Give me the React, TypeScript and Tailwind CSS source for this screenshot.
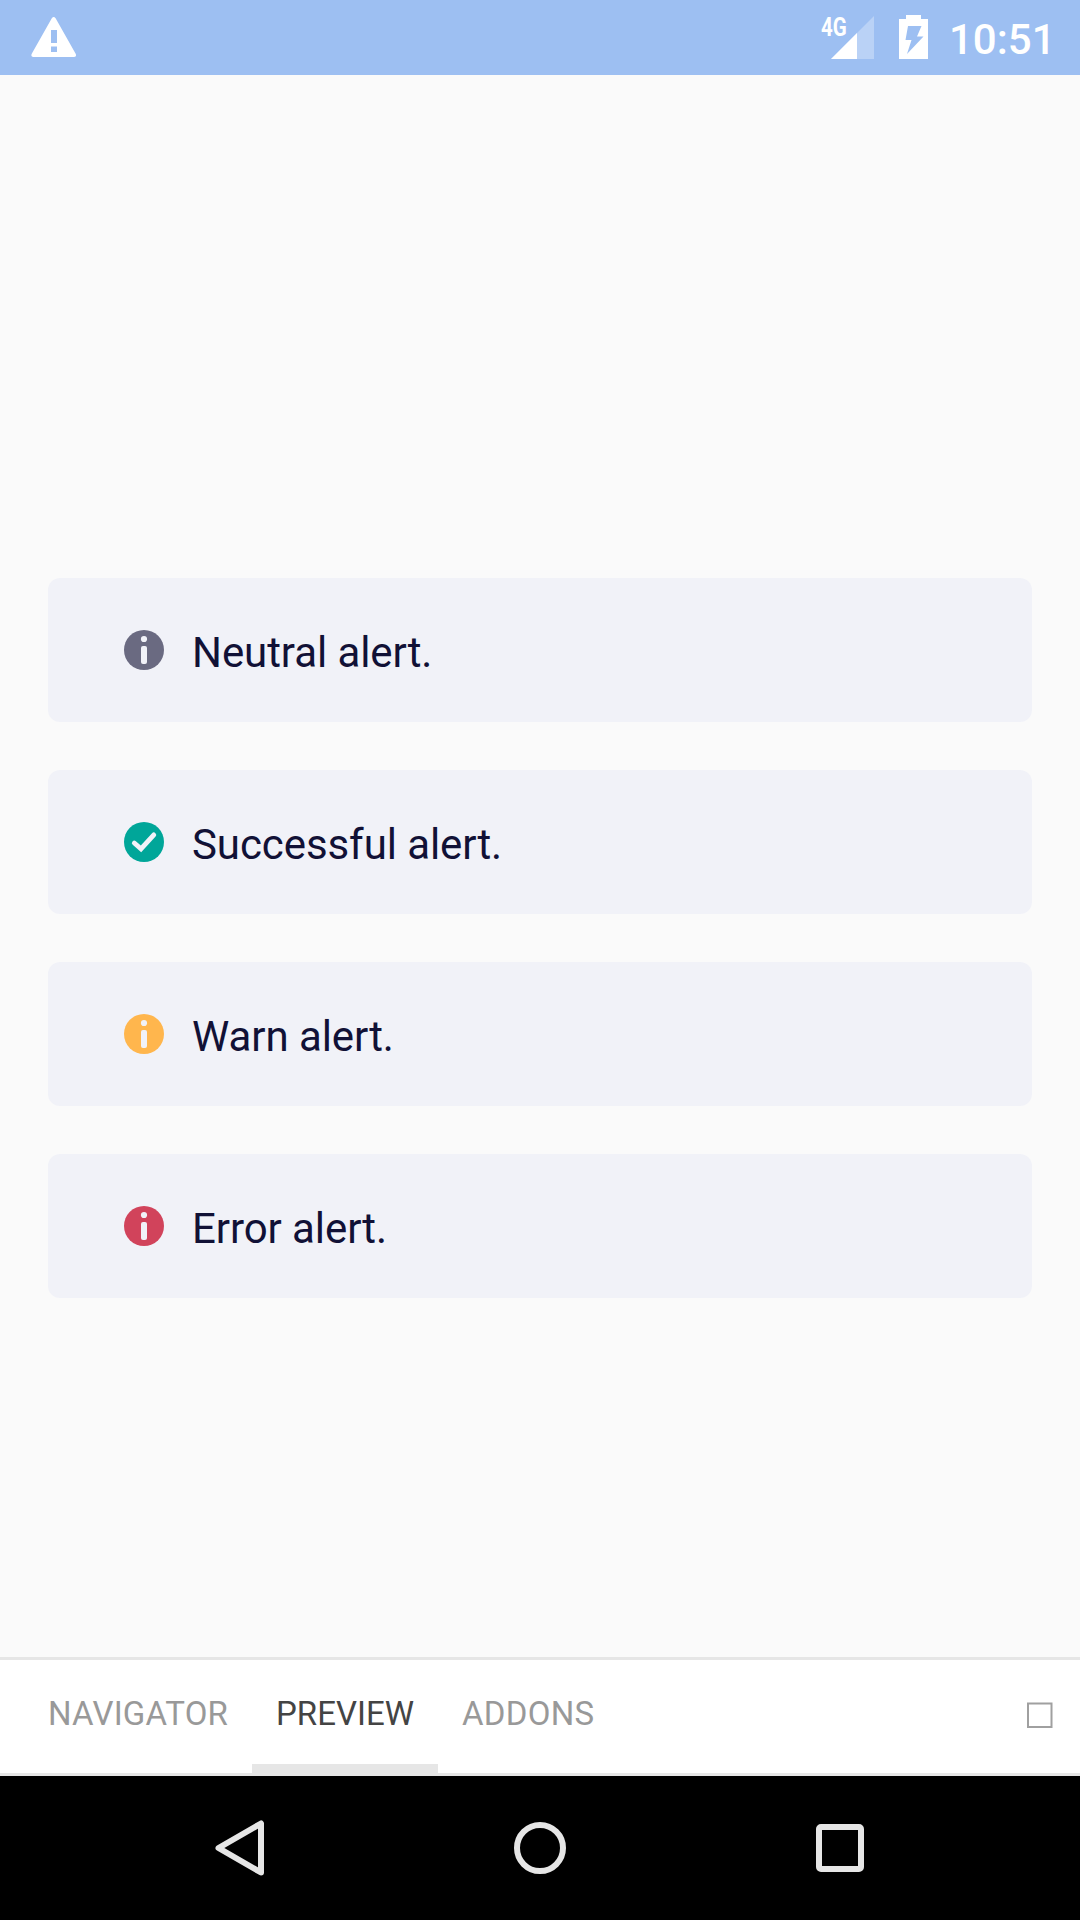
import React from "react";

function InfoIcon({ color }: { color: string }) {
  return (
    <svg width="40" height="40" viewBox="0 0 40 40">
      <circle cx="20" cy="20" r="20" fill={color} />
      <circle cx="20" cy="9" r="3.1" fill="#f1f2f8" />
      <rect x="17" y="16" width="6" height="18" rx="2" fill="#f1f2f8" />
    </svg>
  );
}

function CheckIcon({ color }: { color: string }) {
  return (
    <svg width="40" height="40" viewBox="0 0 40 40">
      <circle cx="20" cy="20" r="20" fill={color} />
      <path d="M10.3 21 L17 26.9 L29.8 12.9" fill="none" stroke="#f1f2f8" strokeWidth="4.8" strokeLinejoin="miter" strokeLinecap="round" />
    </svg>
  );
}

const alerts = [
  { text: "Neutral alert.", icon: <InfoIcon color="#6a6a81" /> },
  { text: "Successful alert.", icon: <CheckIcon color="#00a699" /> },
  { text: "Warn alert.", icon: <InfoIcon color="#ffb64d" /> },
  { text: "Error alert.", icon: <InfoIcon color="#d1435b" /> },
];

function StatusBar() {
  return (
    <header className="flex h-[75px] items-start bg-[#9dbff2] text-white">
      <svg className="mt-[15px] ml-[30px]" width="48" height="44" viewBox="0 0 48 44">
        <path fillRule="evenodd" fill="#fff" d="M21.8 3.2 Q23.7 .6 25.6 3.2 L45.8 39 Q46.8 42 43.8 42 H3.6 Q.6 42 1.6 39 Z M21 15 V28 H27 V15 Z M21 31.5 V37 H27 V31.5 Z" />
      </svg>
      <div className="relative mt-[15px] ml-[742px] h-[45px] w-[56px]">
        <svg width="56" height="45" viewBox="0 0 56 45">
          <path d="M11 44 L54 1 V44 Z" fill="#fff" fillOpacity=".3" />
          <path d="M11 44 L37 18 V44 Z" fill="#fff" />
        </svg>
        <span className="absolute top-[1px] left-[.5px] origin-left scale-x-[.82] text-[25px] leading-[23px] font-bold">4G</span>
      </div>
      <svg className="mt-[15px] ml-[23px]" width="29" height="44" viewBox="0 0 29 44">
        <path fillRule="evenodd" fill="#fff" d="M7 0 H22 V4 H29 V44 H0 V4 H7 Z M9 11 L6.5 25 H12.5 L8 39 L24.5 21.5 H18 L22.5 11 Z" />
      </svg>
      <span className="mt-[15px] ml-[21px] text-[42px] leading-[50px] font-medium whitespace-nowrap">10:51</span>
    </header>
  );
}

function TabBar() {
  return (
    <nav className="flex h-[119px] border-y-3 border-[#e6e6e6] bg-white pl-6 text-[33px] leading-[39px] text-[#999999]">
      <div className="w-[228px] px-6 pt-[34px] tracking-[.22px] whitespace-nowrap">NAVIGATOR</div>
      <div className="w-[186px] border-b-9 border-[#e6e6e6] px-6 pt-[34px] whitespace-nowrap text-[#444444]">PREVIEW</div>
      <div className="px-6 pt-[34px] tracking-[.3px] whitespace-nowrap">ADDONS</div>
      <svg className="mt-[42px] mr-[27px] ml-auto" width="26" height="26" viewBox="0 0 26 26">
        <rect x="1" y="1.5" width="23.5" height="23.5" fill="none" stroke="#a0a0a0" strokeWidth="2" />
      </svg>
    </nav>
  );
}

function SystemNav() {
  return (
    <footer className="flex h-36 items-center bg-black">
      <svg className="ml-[212px]" width="56" height="60" viewBox="0 0 56 60">
        <path d="M6.5 30 L49 5.5 V54.5 Z" fill="none" stroke="#e6e6e6" strokeWidth="6" strokeLinejoin="round" />
      </svg>
      <svg className="ml-[244px]" width="56" height="56" viewBox="0 0 56 56">
        <circle cx="28" cy="28" r="23" fill="none" stroke="#e6e6e6" strokeWidth="6" />
      </svg>
      <div className="ml-[248px] size-12 rounded-[5px] border-6 border-[#e6e6e6]" />
    </footer>
  );
}

export default function App() {
  return (
    <div className="flex h-[1920px] w-[1080px] flex-col overflow-hidden bg-[#fafafa] font-['Roboto',sans-serif]">
      <StatusBar />
      <main className="flex flex-1 flex-col gap-12 px-12 pt-[503px]">
        {alerts.map((a) => (
          <div key={a.text} className="flex h-36 items-center rounded-[12px] bg-[#f1f2f8] pl-[76px]">
            {a.icon}
            <span className="mt-[6px] ml-7 text-[42px] leading-[50px] tracking-[-.08px] text-[#111136]">{a.text}</span>
          </div>
        ))}
      </main>
      <TabBar />
      <SystemNav />
    </div>
  );
}
